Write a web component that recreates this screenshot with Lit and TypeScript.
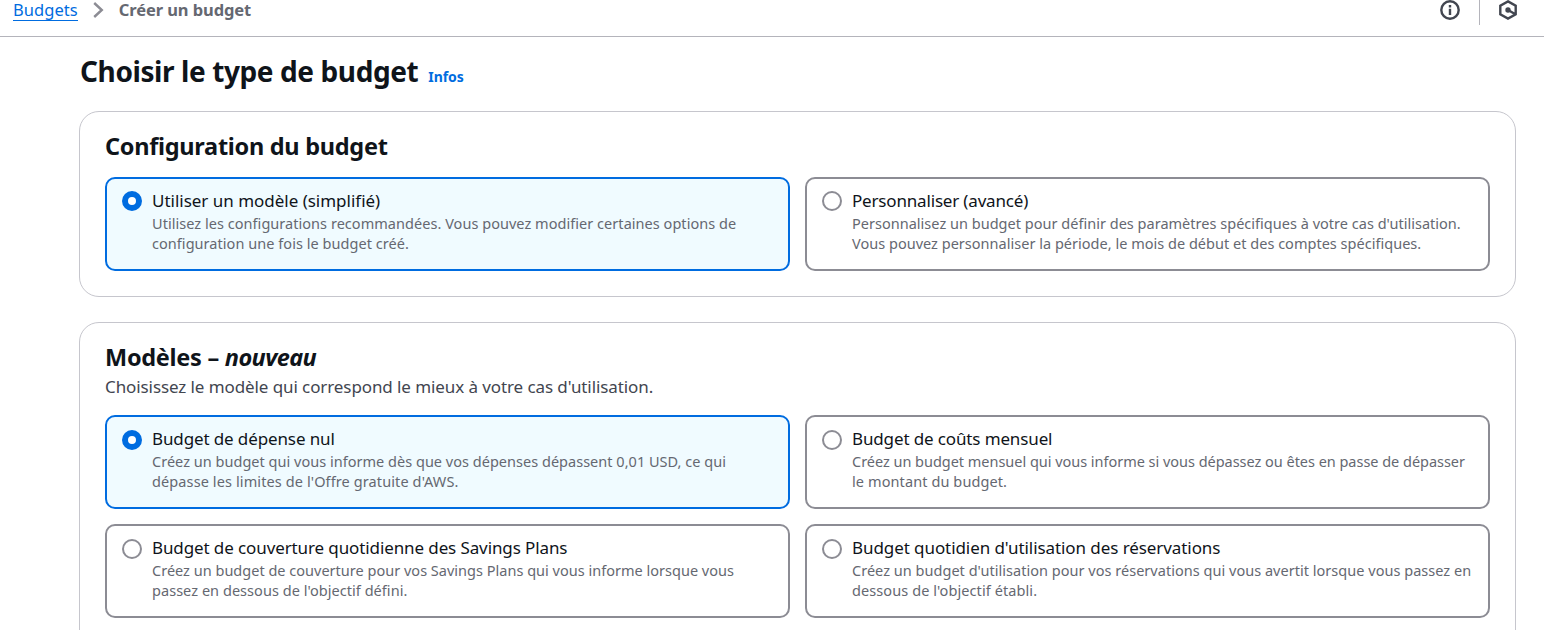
import { LitElement, html, css } from "lit";
import { customElement, property } from "lit/decorators.js";
import { classMap } from "lit/directives/class-map.js";

/* A run of text with its letter spacing in px. */
type Run = [text: string, tracking: number];
interface Option { title: Run; lines: Run[]; selected?: boolean; }

const run = ([text, tracking]: Run) => html`<span style="letter-spacing:${tracking}px">${text}</span>`;

const MODES: Option[] = [
  { title: ["Utiliser un modèle (simplifié)", -0.015], selected: true, lines: [
    ["Utilisez les configurations recommandées. Vous pouvez modifier certaines options de", 0.039],
    ["configuration une fois le budget créé.", 0.046]] },
  { title: ["Personnaliser (avancé)", -0.175], lines: [
    ["Personnalisez un budget pour définir des paramètres spécifiques à votre cas d'utilisation.", 0.018],
    ["Vous pouvez personnaliser la période, le mois de début et des comptes spécifiques.", 0.018]] },
];

const TEMPLATES: Option[] = [
  { title: ["Budget de dépense nul", -0.12], selected: true, lines: [
    ["Créez un budget qui vous informe dès que vos dépenses dépassent 0,01 USD, ce qui", 0.02],
    ["dépasse les limites de l'Offre gratuite d'AWS.", 0.11]] },
  { title: ["Budget de coûts mensuel", -0.13], lines: [
    ["Créez un budget mensuel qui vous informe si vous dépassez ou êtes en passe de dépasser", -0.027],
    ["le montant du budget.", 0.1]] },
  { title: ["Budget de couverture quotidienne des Savings Plans", -0.107], lines: [
    ["Créez un budget de couverture pour vos Savings Plans qui vous informe lorsque vous", 0.011],
    ["passez en dessous de l'objectif défini.", 0.045]] },
  { title: ["Budget quotidien d'utilisation des réservations", -0.077], lines: [
    ["Créez un budget d'utilisation pour vos réservations qui vous avertit lorsque vous passez en", 0.026],
    ["dessous de l'objectif établi.", 0.09]] },
];

@customElement("budget-tiles")
class BudgetTiles extends LitElement {
  @property({ attribute: false }) options: Option[] = [];
  static styles = css`
    :host { display: grid; grid-template-columns: 1fr 1fr; gap: 15px; }
    .tile { box-sizing: border-box; display: flex; gap: 10px; height: 94px; padding: 9px 0 0 15px; border: 2px solid #8c8c94; border-radius: 10px; background: #fff; white-space: nowrap; }
    .tile.selected { border-color: #006ce0; background: #f0fbff; }
    .radio { box-sizing: border-box; flex: none; width: 20px; height: 20px; margin-top: var(--radio-offset, 4px); border: 2px solid #8c8c94; border-radius: 50%; background: #fff; }
    .selected .radio { border: 6px solid #006ce0; }
    .title { font-size: 17px; line-height: 25px; color: #0f141a; }
    .line { font-size: 14.5px; line-height: 20px; color: #656871; }
  `;
  render() {
    return this.options.map(o => html`
      <div class=${classMap({ tile: true, selected: !!o.selected })}>
        <div class="radio"></div>
        <div>
          <div class="title">${run(o.title)}</div>
          ${o.lines.map(l => html`<div class="line">${run(l)}</div>`)}
        </div>
      </div>`);
  }
}

@customElement("app-root")
class AppRoot extends LitElement {
  static styles = css`
    :host { display: block; height: 630px; overflow: hidden; background: #fff; color: #0f141a; font-family: "Noto Sans", "Open Sans", sans-serif; }
    .bar { box-sizing: border-box; display: flex; align-items: flex-start; height: 37px; padding: 0 26px 0 13px; border-bottom: 1px solid #b4b4bb; font-size: 16.5px; line-height: 20px; white-space: nowrap; }
    .link { color: #006ce0; height: 20px; border-bottom: 1px solid #006ce0; letter-spacing: 0.053px; }
    .chevron { display: block; margin: 2px 14px 0 15px; }
    .current { flex: 1; color: #656871; font-weight: 700; letter-spacing: -0.09px; }
    .bar svg { flex: none; display: block; }
    .divider { width: 1px; height: 25px; margin: 0 18px 0 19px; background: #b4b4bb; }
    main { padding: 15px 28px 0 79px; }
    h1, h2, p { margin: 0; white-space: nowrap; }
    .heading { display: flex; align-items: baseline; gap: 10px; height: 59px; padding-left: 1px; }
    h1 { font-size: 28px; line-height: 38px; letter-spacing: -0.4px; }
    .info { color: #006ce0; font-size: 14px; font-weight: 700; letter-spacing: -0.053px; }
    section { padding: 19px 25px 25px; border: 1px solid #c6c6cd; border-radius: 20px; }
    section + section { margin-top: 25px; padding-bottom: 60px; }
    h2 { font-size: 23.5px; line-height: 30px; letter-spacing: -0.28px; }
    h2 em { letter-spacing: -0.55px; }
    p { margin-top: 2px; font-size: 17px; line-height: 25px; color: #424650; letter-spacing: -0.091px; }
    budget-tiles { margin-top: 16px; }
    .modes { --radio-offset: 4px; }
    .modes { --radio-offset: 3px; }
  `;
  render() {
    return html`
      <div class="bar">
        <a class="link">Budgets</a>
        <svg class="chevron" width="12" height="16" viewBox="0 0 12 16" fill="none" stroke="#8c8c94" stroke-width="2.4"><path d="M1.2 1 8.8 8 1.2 15" /></svg>
        <span class="current">Créer un budget</span>
        <svg width="20" height="20" viewBox="0 0 20 20" fill="none" stroke="#424650" stroke-width="2.4"><circle cx="10" cy="10" r="8.7" /><path d="M10 8.7V15M10 5v2.4" /></svg>
        <div class="divider"></div>
        <svg width="20" height="20" viewBox="0 0 20 20" fill="none" stroke="#424650" stroke-width="2.4"><path d="M10 1.4 17.7 5.7v8.6L10 18.6 2.3 14.3V5.7zM10 10l7 4" /><circle cx="10" cy="10" r="2.7" fill="#424650" stroke="none" /></svg>
      </div>
      <main>
        <div class="heading"><h1>Choisir le type de budget</h1><a class="info">Infos</a></div>
        <section>
          <h2>Configuration du budget</h2>
          <budget-tiles class="modes" .options=${MODES}></budget-tiles>
        </section>
        <section>
          <h2>Modèles – <em>nouveau</em></h2>
          <p>Choisissez le modèle qui correspond le mieux à votre cas d'utilisation.</p>
          <budget-tiles .options=${TEMPLATES}></budget-tiles>
        </section>
      </main>`;
  }
}
